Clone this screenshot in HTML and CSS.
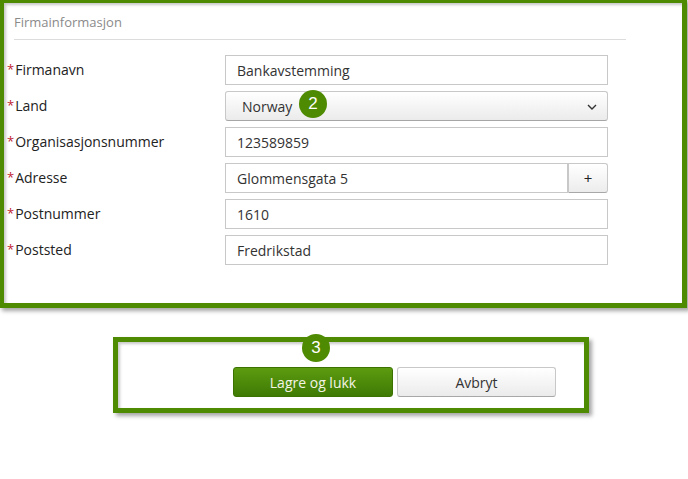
FILE: index.html
```html
<!DOCTYPE html>
<html lang="no">
<head>
<meta charset="utf-8">
<title>Firmainformasjon</title>
<link rel="stylesheet" href="styles.css">
</head>
<body>
<section class="frame frame-top">
  <h2 class="section-title">Firmainformasjon</h2>
  <div class="form">
    <label class="label"><span class="req">*</span>Firmanavn</label>
    <div class="field"><input class="input" type="text" value="Bankavstemming"></div>

    <label class="label"><span class="req">*</span>Land</label>
    <div class="field">
      <div class="select">
        <span>Norway</span>
        <svg class="chev" width="10" height="6" viewBox="0 0 10 6"><path d="M1 1 L5 5 L9 1" fill="none" stroke="#333" stroke-width="1.4"/></svg>
        <span class="badge badge-2">2</span>
      </div>
    </div>

    <label class="label"><span class="req">*</span>Organisasjonsnummer</label>
    <div class="field"><input class="input" type="text" value="123589859"></div>

    <label class="label"><span class="req">*</span>Adresse</label>
    <div class="field group">
      <input class="input grow" type="text" value="Glommensgata 5">
      <button class="addon" type="button">+</button>
    </div>

    <label class="label"><span class="req">*</span>Postnummer</label>
    <div class="field"><input class="input" type="text" value="1610"></div>

    <label class="label"><span class="req">*</span>Poststed</label>
    <div class="field"><input class="input" type="text" value="Fredrikstad"></div>
  </div>
</section>

<section class="frame frame-bottom">
  <span class="badge badge-3">3</span>
  <div class="actions">
    <button class="btn btn-primary" type="button">Lagre og lukk</button>
    <button class="btn btn-default" type="button">Avbryt</button>
  </div>
</section>
</body>
</html>
```
FILE: styles.css
```css
* { box-sizing: border-box; }
html, body { margin: 0; padding: 0; background: #fff; }
body {
  font-family: "Open Sans", "Liberation Sans", sans-serif;
  color: #333;
  width: 688px;
  height: 479px;
  overflow: hidden;
}

.frame {
  border: 5px solid #4f8a03;
  background: #fff;
  box-shadow: 3px 3px 4px rgba(0,0,0,0.35), inset 2px 2px 3px rgba(0,0,0,0.22);
}

.frame-top {
  margin: -2px 0 0 -1px;
  width: 688px;
  height: 310px;
  padding: 0 0 0 3px;
}

.section-title {
  margin: 0 0 0 7px;
  width: 612px;
  padding: 10px 0 8px 0;
  font-size: 13px;
  line-height: 18px;
  font-weight: normal;
  color: #8a8a8a;
  border-bottom: 1px solid #dcdcdc;
}

.form {
  margin-top: 15px;
  display: grid;
  grid-template-columns: 218px 383px;
  row-gap: 6px;
}

.label {
  display: flex;
  align-items: center;
  height: 30px;
  padding-bottom: 2px;
  font-size: 14px;
  color: #222;
}
.req { color: #c0222e; margin-right: 1px; font-size: 13px; }

.field { position: relative; height: 30px; }
.group { display: flex; }

.input {
  display: block;
  width: 100%;
  height: 30px;
  margin: 0;
  border: 1px solid #c8c8c8;
  border-radius: 0;
  padding: 0 11px;
  font-family: inherit;
  font-size: 14px;
  color: #333;
  background: #fff;
  outline: none;
}
.grow { flex: 1; width: auto; min-width: 0; }

.addon {
  width: 40px;
  height: 30px;
  margin: 0;
  border: 1px solid #c8c8c8;
  border-bottom-color: #a8a8a8;
  border-radius: 0 3px 3px 0;
  background: linear-gradient(#ffffff, #ececec);
  font-family: inherit;
  font-size: 15px;
  color: #222;
  padding: 0;
}

.select {
  position: relative;
  display: flex;
  align-items: center;
  justify-content: space-between;
  height: 30px;
  border: 1px solid #c8c8c8;
  border-bottom-color: #a6a6a6;
  border-radius: 3px;
  background: linear-gradient(#ffffff, #ebebeb);
  padding: 0 10px 0 16px;
  font-size: 14px;
  color: #333;
}
.chev { margin-top: 2px; }

.badge {
  position: absolute;
  width: 28px;
  height: 28px;
  border-radius: 50%;
  background: #4f8a03;
  color: #fff;
  font-size: 17px;
  line-height: 28px;
  text-align: center;
  font-family: "Liberation Sans", "Open Sans", sans-serif;
}
.badge-2 { left: 73px; top: -2px; }

.frame-bottom {
  position: relative;
  margin: 29px 0 0 113px;
  width: 476px;
  height: 76px;
  padding: 25px 0 0 115px;
}
.badge-3 { left: 184px; top: -8px; }

.actions { display: flex; gap: 4px; }

.btn {
  height: 30px;
  margin: 0;
  border-radius: 3px;
  font-family: inherit;
  font-size: 14px;
  padding: 0;
}
.btn-primary {
  width: 160px;
  border: 1px solid #3c7200;
  background: linear-gradient(#5c9b10, #3f7a04);
  color: #f4f4e6;
}
.btn-default {
  width: 159px;
  border: 1px solid #c8c8c8;
  border-bottom-color: #a8a8a8;
  background: linear-gradient(#ffffff, #ebebeb);
  color: #333;
}
```
